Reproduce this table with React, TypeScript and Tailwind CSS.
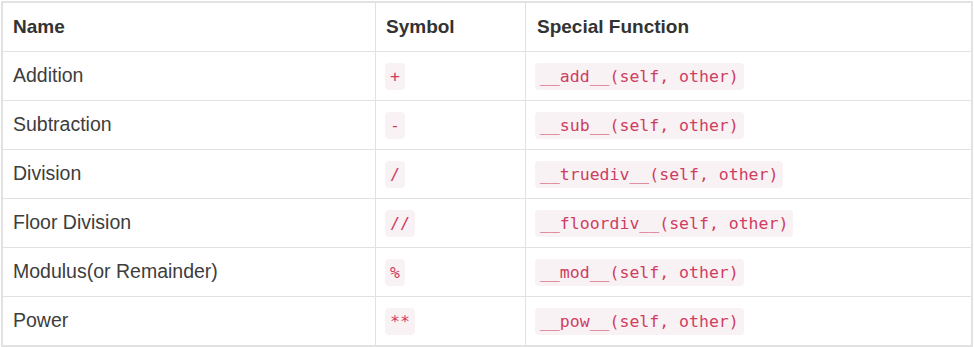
import React from 'react';

const rows = [
  { name: 'Addition', symbol: '+', fn: '__add__(self, other)' },
  { name: 'Subtraction', symbol: '-', fn: '__sub__(self, other)' },
  { name: 'Division', symbol: '/', fn: '__truediv__(self, other)' },
  { name: 'Floor Division', symbol: '//', fn: '__floordiv__(self, other)' },
  { name: 'Modulus(or Remainder)', symbol: '%', fn: '__mod__(self, other)' },
  { name: 'Power', symbol: '**', fn: '__pow__(self, other)' },
];

const Code: React.FC<{ children: React.ReactNode }> = ({ children }) => (
  <code className="inline-block h-[27px] leading-[27px] px-[5px] rounded-[4px] bg-[#f9f2f4] text-[#cf3d62] text-[16.5px] font-['DejaVu_Sans_Mono',monospace] whitespace-pre">
    {children}
  </code>
);

const App: React.FC = () => {
  return (
    <div className="w-[974px] h-[347px] bg-white pt-px pl-px font-['Liberation_Sans',Arial,sans-serif] text-[#3d3d3d]">
      <div className="w-[972px] border-2 border-[#e2e2e2]">
        <div className="grid grid-cols-[373px_150px_1fr] h-[49px] border-b border-[#e2e2e2] font-bold text-[19px] text-[#333]">
          <div className="flex items-center px-[10px] border-r border-[#e2e2e2]">Name</div>
          <div className="flex items-center px-[10px] border-r border-[#e2e2e2]">Symbol</div>
          <div className="flex items-center px-[11px]">Special Function</div>
        </div>
        {rows.map((r, i) => (
          <div
            key={r.name}
            className={`grid grid-cols-[373px_150px_1fr] text-[19.5px] ${i < rows.length - 1 ? 'h-[49px] border-b border-[#e2e2e2]' : 'h-[48px]'}`}
          >
            <div className="flex items-center px-[10px] border-r border-[#e2e2e2]">{r.name}</div>
            <div className="flex items-center px-[9px] border-r border-[#e2e2e2]">
              <Code>{r.symbol}</Code>
            </div>
            <div className="flex items-center px-[9px]">
              <Code>{r.fn}</Code>
            </div>
          </div>
        ))}
      </div>
    </div>
  );
};

export default App;
